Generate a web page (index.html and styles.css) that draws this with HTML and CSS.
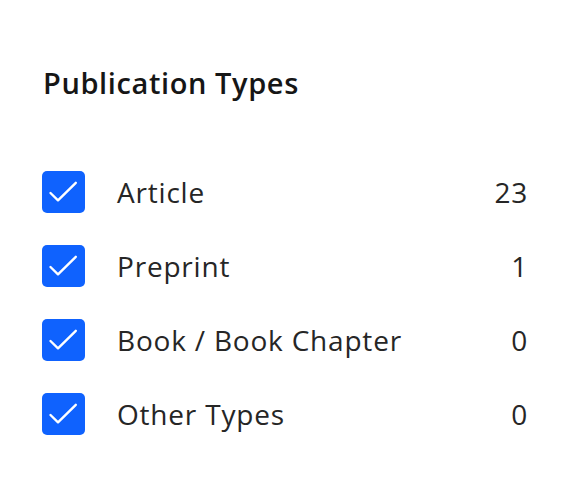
FILE: index.html
```html
<!DOCTYPE html>
<html>
<head>
<meta charset="utf-8">
<link rel="stylesheet" href="styles.css">
</head>
<body>
<div class="panel">
  <h2 class="title">Publication Types</h2>
  <ul class="list">
    <li class="row">
      <span class="box"><svg viewBox="0 0 42 42" width="42" height="42"><path d="M8.5 22 L16 29.3 L33.8 11.8" fill="none" stroke="#fff" stroke-width="2.4" stroke-linecap="round" stroke-linejoin="round"/></svg></span>
      <span class="label">Article</span>
      <span class="count">23</span>
    </li>
    <li class="row">
      <span class="box"><svg viewBox="0 0 42 42" width="42" height="42"><path d="M8.5 22 L16 29.3 L33.8 11.8" fill="none" stroke="#fff" stroke-width="2.4" stroke-linecap="round" stroke-linejoin="round"/></svg></span>
      <span class="label">Preprint</span>
      <span class="count">1</span>
    </li>
    <li class="row">
      <span class="box"><svg viewBox="0 0 42 42" width="42" height="42"><path d="M8.5 22 L16 29.3 L33.8 11.8" fill="none" stroke="#fff" stroke-width="2.4" stroke-linecap="round" stroke-linejoin="round"/></svg></span>
      <span class="label">Book / Book Chapter</span>
      <span class="count">0</span>
    </li>
    <li class="row">
      <span class="box"><svg viewBox="0 0 42 42" width="42" height="42"><path d="M8.5 22 L16 29.3 L33.8 11.8" fill="none" stroke="#fff" stroke-width="2.4" stroke-linecap="round" stroke-linejoin="round"/></svg></span>
      <span class="label">Other Types</span>
      <span class="count">0</span>
    </li>
  </ul>
</div>
</body>
</html>
```
FILE: styles.css
```css
html, body {
  margin: 0;
  padding: 0;
  background: #ffffff;
}
body {
  font-family: "Open Sans", "Noto Sans", sans-serif;
  color: #262626;
}
.panel {
  padding: 65px 40px 0 42px;
}
.title {
  margin: 0 0 70px 1px;
  font-size: 29px;
  line-height: 36px;
  font-weight: 600;
  letter-spacing: 0.6px;
  color: #161616;
}
.list {
  list-style: none;
  margin: 0;
  padding: 0;
  display: flex;
  flex-direction: column;
  gap: 32px;
}
.row {
  display: flex;
  align-items: center;
  height: 42px;
}
.box {
  width: 43px;
  height: 42px;
  border-radius: 5px;
  background: #0f62fe;
  display: block;
  flex: none;
}
.box svg {
  display: block;
}
.label {
  margin-left: 32px;
  flex: 1;
  font-size: 28px;
  line-height: 42px;
  letter-spacing: 0.8px;
  color: #262626;
}
.count {
  font-size: 28px;
  line-height: 42px;
  letter-spacing: 0.8px;
  margin-right: -1px;
  color: #262626;
}
```
